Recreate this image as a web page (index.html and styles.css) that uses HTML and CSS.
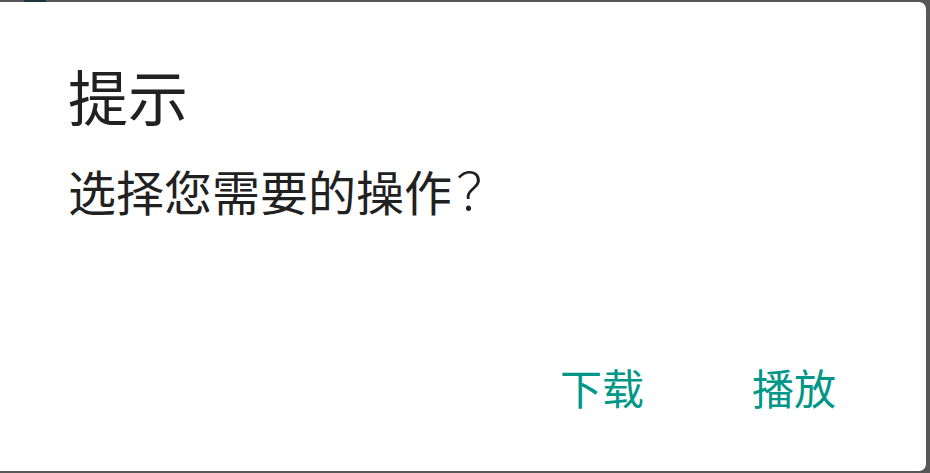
FILE: index.html
```html
<!DOCTYPE html>
<html lang="zh-CN">
<head>
<meta charset="utf-8">
<title>提示</title>
<link rel="stylesheet" href="styles.css">
</head>
<body>
<div class="backdrop-spot"></div>
<div class="dialog">
  <h1 class="title">提示</h1>
  <p class="message">选择您需要的操作<span class="qmark">？</span></p>
  <div class="actions">
    <button class="btn">下载</button>
    <button class="btn">播放</button>
  </div>
</div>
</body>
</html>
```
FILE: styles.css
```css
html, body {
  margin: 0;
  padding: 0;
  width: 930px;
  height: 473px;
  overflow: hidden;
}
body {
  background: #575757;
  font-family: "Noto Sans CJK SC", "Noto Sans", sans-serif;
  position: relative;
}
.backdrop-spot {
  position: absolute;
  left: 24px;
  top: 0;
  width: 22px;
  height: 2px;
  background: #1d3440;
}
.dialog {
  margin: 2px 0 0 -8px;
  width: 934px;
  height: 469px;
  box-sizing: border-box;
  background: #ffffff;
  border-radius: 7px;
  padding: 63px 0 0 76px;
  display: flex;
  flex-direction: column;
}
.title {
  margin: 0;
  font-size: 60px;
  line-height: 60px;
  font-weight: 400;
  color: #212121;
}
.message {
  margin: 41px 0 0 0;
  font-size: 48px;
  line-height: 48px;
  color: #212121;
}
.qmark {
  display: inline-block;
  padding-left: 4px;
  font-weight: 300;
  transform: scale(1.08);
  transform-origin: left bottom;
}
.actions {
  margin-top: auto;
  padding: 0 66px 63px 0;
  display: flex;
  justify-content: flex-end;
  gap: 60px;
}
.btn {
  border: none;
  background: transparent;
  padding: 0 24px;
  margin: 0;
  font-family: inherit;
  font-size: 42px;
  line-height: 42px;
  color: #009688;
}
```
